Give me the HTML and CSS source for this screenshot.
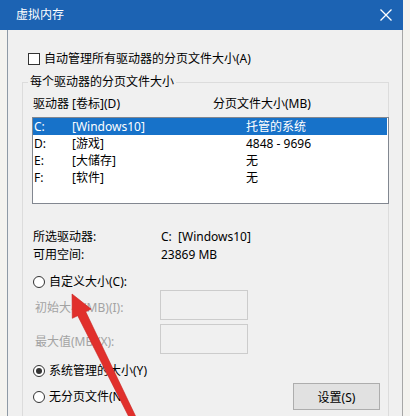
FILE: index.html
```html
<!DOCTYPE html>
<html lang="zh-CN">
<head>
  <meta charset="UTF-8" />
  <title>虚拟内存</title>
  <link rel="stylesheet" href="styles.css">
</head>
<body>

<div class="window">
  <!-- 标题栏 -->
  <div class="titlebar">
    <span class="title">虚拟内存</span>
    <svg class="close" width="12" height="12" viewBox="0 0 12 12">
      <path d="M0.5 0.5 L11.5 11.5 M11.5 0.5 L0.5 11.5" stroke="#fff" stroke-width="1.3" fill="none"/>
    </svg>
  </div>

  <div class="content">
    <label class="check-row">
      <span class="checkbox"></span>
      <span>自动管理所有驱动器的分页文件大小(A)</span>
    </label>

    <fieldset class="group">
      <legend>每个驱动器的分页文件大小</legend>

      <div class="headers">
        <span class="h-drive">驱动器 [卷标](D)</span>
        <span>分页文件大小(MB)</span>
      </div>

      <div class="listbox">
        <div class="row selected"><span>C:</span><span>[Windows10]</span><span>托管的系统</span></div>
        <div class="row"><span>D:</span><span>[游戏]</span><span>4848 - 9696</span></div>
        <div class="row"><span>E:</span><span>[大储存]</span><span>无</span></div>
        <div class="row"><span>F:</span><span>[软件]</span><span>无</span></div>
      </div>

      <div class="info">
        <span>所选驱动器:</span><span>C:&nbsp;&nbsp;[Windows10]</span>
        <span>可用空间:</span><span>23869 MB</span>
      </div>

      <div class="radio-row first">
        <span class="radio"></span>
        <span>自定义大小(C):</span>
      </div>

      <div class="field-row">
        <span class="field-label">初始大小(MB)(I):</span>
        <span class="field-box"></span>
      </div>
      <div class="field-row second">
        <span class="field-label">最大值(MB)(X):</span>
        <span class="field-box"></span>
      </div>

      <div class="radio-row sys">
        <span class="radio checked"></span>
        <span>系统管理的大小(Y)</span>
      </div>

      <div class="bottom-row">
        <div class="radio-row">
          <span class="radio"></span>
          <span>无分页文件(N)</span>
        </div>
        <button class="btn">设置(S)</button>
      </div>
    </fieldset>
  </div>
</div>

<!-- 红色箭头标注 -->
<svg class="arrow" width="410" height="416" viewBox="0 0 410 416">
  <polygon fill="#e1302c" stroke="#c9221f" stroke-width="0.6"
    points="72,294 91.1,309.1 85.7,311.7 140.9,427.3 135.5,430 77.7,315.7 72.3,318.3"/>
</svg>

</body>
</html>
```

FILE: styles.css
```css
* {
  margin: 0;
  padding: 0;
  box-sizing: border-box;
}

body {
  font-family: "Noto Sans", "Noto Sans CJK SC", sans-serif;
  font-size: 12px;
  color: #000;
  background: #f4f3ef;
  width: 410px;
  height: 416px;
  overflow: hidden;
  position: relative;
}

.window {
  width: 403px;
}

.titlebar {
  height: 30px;
  background: #1c63b3;
  color: #fff;
  display: flex;
  align-items: center;
  justify-content: space-between;
  padding: 0 11px 0 16px;
}

.title {
  font-size: 12px;
  line-height: 16px;
}

.close {
  display: block;
  margin-top: -1px;
}

.content {
  margin-left: 7px;
  background: #f0f0f0;
  border-left: 1px solid #8f9aa6;
  border-right: 1px solid #a7a7a7;
  padding-top: 20px;
  height: 386px;
  overflow: hidden;
}

.check-row {
  display: flex;
  align-items: center;
  gap: 4px;
  margin-left: 20px;
  line-height: 18px;
}

.checkbox {
  width: 12px;
  height: 12px;
  border: 1px solid #333;
  background: #fff;
}

.group {
  min-width: 0;
  margin: 6px 13px 0 14px;
  border: 1px solid #dcdcdc;
  padding: 0 7px 40px 10px;
}

.group legend {
  margin-left: -5px;
  padding: 0 2px;
  line-height: 16px;
}

.headers {
  display: flex;
  line-height: 16px;
  margin-top: 6px;
}

.h-drive {
  width: 180px;
}

.listbox {
  width: 357px;
  height: 87px;
  margin: 5px 0 0 -1px;
  background: #fff;
  border: 1px solid #828790;
}

.row {
  display: grid;
  grid-template-columns: 38px 174px 1fr;
  height: 17px;
  line-height: 17px;
  padding-left: 1px;
  margin-right: 1px;
}

.row.selected {
  background: #1772c9;
  color: #fff;
}

.info {
  display: grid;
  grid-template-columns: 128px 1fr;
  line-height: 18px;
  margin-top: 24px;
}

.radio-row {
  display: flex;
  align-items: center;
  gap: 4px;
  line-height: 16px;
}

.radio-row.first {
  margin-top: 10px;
}

.radio {
  width: 12px;
  height: 12px;
  border: 1px solid #333;
  border-radius: 50%;
  background: #fff;
  display: flex;
  align-items: center;
  justify-content: center;
}

.radio.checked::after {
  content: "";
  width: 6px;
  height: 6px;
  border-radius: 50%;
  background: #333;
}

.field-row {
  display: flex;
  align-items: center;
  height: 30px;
  padding-left: 2px;
}

.field-row.second {
  margin-top: 4px;
}

.field-label {
  width: 125px;
  color: #a3a3a3;
  padding-top: 3px;
}

.field-box {
  width: 88px;
  height: 30px;
  border: 1px solid #cccccc;
  background: #f0f0f0;
}

.radio-row.sys {
  margin-top: 9px;
}

.bottom-row {
  display: flex;
  align-items: center;
  justify-content: space-between;
  margin-top: 4px;
  padding-right: 1px;
}

.btn {
  width: 87px;
  height: 27px;
  background: #e1e1e1;
  border: 1px solid #adadad;
  font-family: inherit;
  font-size: 12px;
  color: #000;
}

.arrow {
  position: absolute;
  top: 0;
  left: 0;
  pointer-events: none;
}
```
